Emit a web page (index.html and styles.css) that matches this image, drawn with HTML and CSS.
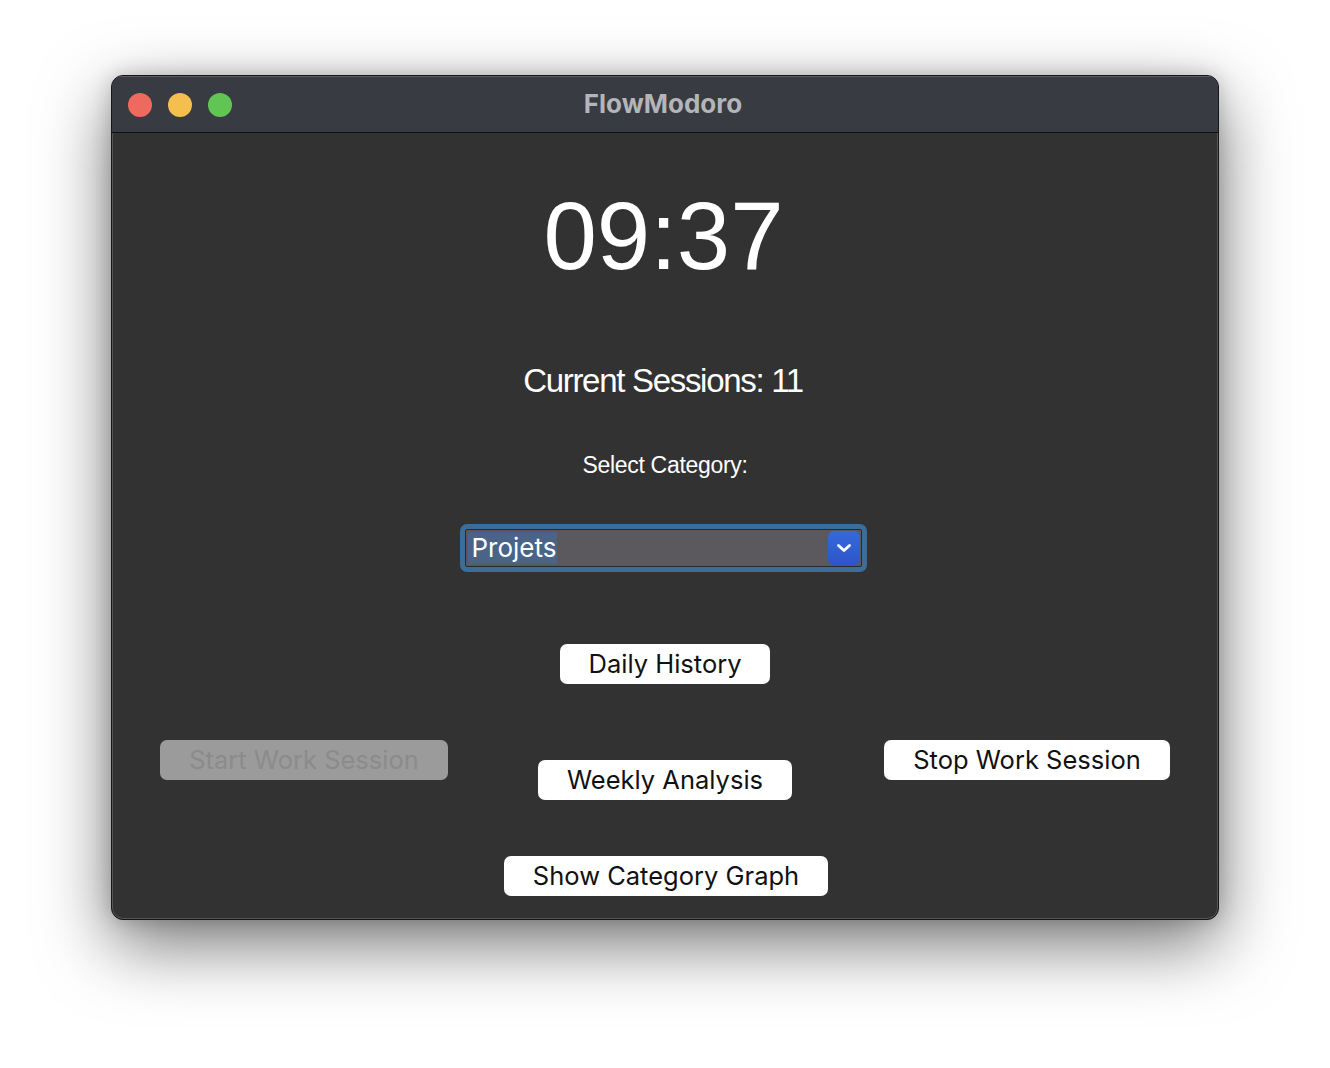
FILE: index.html
```html
<!DOCTYPE html>
<html>
<head>
<meta charset="utf-8">
<title>FlowModoro</title>
<link rel="stylesheet" href="styles.css">
</head>
<body>
<div class="window">
  <div class="titlebar">
    <div class="lights">
      <span class="light red"></span>
      <span class="light yellow"></span>
      <span class="light green"></span>
    </div>
    <div class="title">FlowModoro</div>
  </div>
  <div class="content">
    <div class="timer">09:37</div>
    <div class="sessions">Current Sessions: 11</div>
    <div class="select-label">Select Category:</div>
    <div class="combo-ring">
      <div class="combo">
        <span class="combo-text">Projets</span>
        <span class="combo-btn">
          <svg width="16" height="10" viewBox="0 0 16 10"><path d="M2.5 2.5 L8 7.5 L13.5 2.5" fill="none" stroke="#fff" stroke-width="2.8" stroke-linecap="round" stroke-linejoin="round"/></svg>
        </span>
      </div>
    </div>
    <button class="btn btn-daily">Daily History</button>
    <div class="row">
      <button class="btn btn-start" disabled>Start Work Session</button>
      <button class="btn btn-weekly">Weekly Analysis</button>
      <button class="btn btn-stop">Stop Work Session</button>
    </div>
    <button class="btn btn-graph">Show Category Graph</button>
  </div>
</div>
</body>
</html>
```
FILE: styles.css
```css
html, body {
  margin: 0;
  padding: 0;
  background: #ffffff;
}
body {
  width: 1330px;
  height: 1068px;
  overflow: hidden;
}
.window {
  width: 1106px;
  height: 843px;
  margin: 75px 0 0 111px;
  border: 1px solid #161616;
  border-radius: 12px;
  background: #323232;
  box-shadow: inset 0 0 0 1px #555, 0 24px 70px rgba(0,0,0,0.55), 0 0 20px rgba(0,0,0,0.18);
  overflow: hidden;
  display: flex;
  flex-direction: column;
}
.titlebar {
  height: 56px;
  flex: none;
  background: #383b41;
  border-bottom: 1px solid #121212;
  box-shadow: inset 0 1px 0 #5a5d62;
  display: flex;
  align-items: center;
  position: relative;
}
.lights {
  display: flex;
  gap: 16px;
  padding-left: 16px;
  margin-top: 1px;
}
.light {
  width: 24px;
  height: 24px;
  border-radius: 50%;
  display: block;
}
.red { background: #ee6a5f; }
.yellow { background: #f5bf4f; }
.green { background: #61c554; }
.title {
  position: absolute;
  left: 0;
  right: 0;
  top: 0;
  bottom: 0;
  display: flex;
  align-items: center;
  justify-content: center;
  font-family: Inter, "Noto Sans", sans-serif;
  font-weight: 700;
  font-size: 26px;
  color: #b2b5ba;
  padding-right: 4px;
  padding-bottom: 2px;
}
.content {
  flex: 1;
  display: flex;
  flex-direction: column;
  align-items: center;
  padding-top: 55px;
}
.timer {
  font-family: "Liberation Sans", Arial, sans-serif;
  font-size: 96px;
  line-height: 96px;
  color: #ffffff;
  margin-right: 3px;
}
.sessions {
  margin-top: 80px;
  font-family: "Liberation Sans", Arial, sans-serif;
  font-size: 33px;
  line-height: 33px;
  letter-spacing: -1.3px;
  color: #ffffff;
  margin-right: 4px;
}
.select-label {
  margin-top: 57px;
  font-family: "Liberation Sans", Arial, sans-serif;
  font-size: 23px;
  line-height: 22px;
  letter-spacing: -0.3px;
  color: #ffffff;
}
.combo-ring {
  margin-top: 48px;
  margin-right: 4px;
  width: 397px;
  height: 38px;
  border: 5px solid #3b6d9b;
  border-radius: 7px;
  background: #3b6d9b;
  display: flex;
}
.combo {
  flex: 1;
  display: flex;
  align-items: center;
  justify-content: space-between;
  background: #5b585e;
  border: 1px solid #2a2a2e;
  border-radius: 2px;
  padding: 0 1px 0 2px;
}
.combo-text {
  font-family: Inter, "Noto Sans", sans-serif;
  font-size: 26px;
  line-height: 32px;
  height: 32px;
  color: #ffffff;
  background: #4a6487;
  padding: 0 1px 0 4px;
}
.combo-btn {
  width: 32px;
  height: 34px;
  border-radius: 6px;
  background: linear-gradient(#3669dc, #2b56c7);
  display: flex;
  align-items: center;
  justify-content: center;
}
.btn {
  font-family: Inter, "Noto Sans", sans-serif;
  font-size: 25.5px;
  height: 40px;
  line-height: 40px;
  padding: 0;
  border: none;
  border-radius: 7px;
  background: #ffffff;
  color: #111111;
  white-space: nowrap;
}
.btn-daily {
  margin-top: 72px;
  width: 210px;
}
.row {
  margin-top: 56px;
  width: 1010px;
  height: 60px;
  display: grid;
  grid-template-columns: 1fr auto 1fr;
  align-items: start;
}
.btn-start {
  justify-self: start;
  width: 288px;
  background: #9b9b9b;
  color: #8b8b8b;
}
.btn-weekly {
  margin-top: 20px;
  width: 254px;
}
.btn-stop {
  justify-self: end;
  width: 286px;
}
.btn-graph {
  margin-top: 56px;
  width: 324px;
  margin-left: 2px;
}
```
